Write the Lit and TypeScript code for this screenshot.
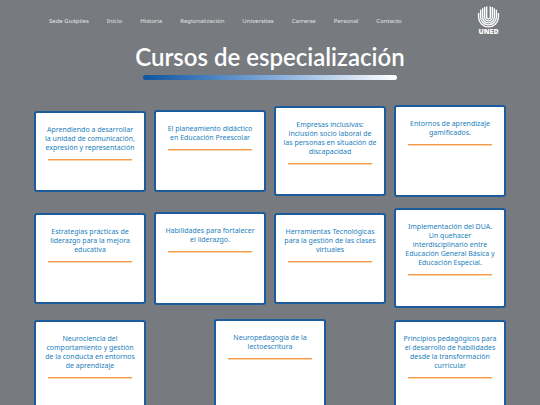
import { LitElement, html, css, svg } from "lit";
import { customElement, property } from "lit/decorators.js";
import { styleMap } from "lit/directives/style-map.js";

interface Course {
  lines: string[];
  height: number;
}

const NAV = ["Sede Guápiles", "Inicio", "Historia", "Regionalización", "Universitas", "Carreras", "Personal", "Contacto"];

const ROWS: Course[][] = [
  [
    { lines: ["Aprendiendo a desarrollar", "la unidad de comunicación,", "expresión y representación"], height: 81 },
    { lines: ["El planeamiento didáctico", "en Educación Preescolar"], height: 82 },
    { lines: ["Empresas inclusivas:", "inclusión socio laboral de", "las personas en situación de", "discapacidad"], height: 90 },
    { lines: ["Entornos de aprendizaje", "gamificados."], height: 92 },
  ],
  [
    { lines: ["Estrategias prácticas de", "liderazgo para la mejora", "educativa"], height: 91 },
    { lines: ["Habilidades para fortalecer", "el liderazgo."], height: 93 },
    { lines: ["Herramientas Tecnológicas", "para la gestión de las clases", "virtuales"], height: 91 },
    { lines: ["Implementación del DUA.", "Un quehacer", "interdisciplinario entre", "Educación General Básica y", "Educación Especial."], height: 100 },
  ],
  [
    { lines: ["Neurociencia del", "comportamiento y gestión", "de la conducta en entornos", "de aprendizaje"], height: 100 },
    { lines: ["Neuropedagogía de la", "lectoescritura"], height: 102 },
    { lines: ["Principios pedagógicos para", "el desarrollo de habilidades", "desde la transformación", "curricular"], height: 100 },
  ],
];

@customElement("course-card")
export class CourseCard extends LitElement {
  @property({ attribute: false }) lines: string[] = [];

  static styles = css`
    :host {
      display: block;
      box-sizing: border-box;
      padding: 12px 4px 0;
      border: 2px solid #1c5b9c;
      border-radius: 3px;
      background: #fff;
      text-align: center;
    }
    .title {
      margin: 0;
      font-size: 7px;
      line-height: 9px;
      font-weight: 400;
      color: #1a80bd;
    }
    .line {
      display: block;
      white-space: nowrap;
    }
    .rule {
      height: 1px;
      margin: 7px 8px 0;
      border: 0;
      border-bottom: 1px solid #fbd3a8;
      background: #f29a4a;
    }
  `;

  render() {
    return html`
      <h2 class="title">${this.lines.map((l) => html`<span class="line">${l} </span>`)}</h2>
      <hr class="rule" />
    `;
  }
}

@customElement("app-root")
export class AppRoot extends LitElement {
  static styles = css`
    :host {
      display: block;
      box-sizing: border-box;
      height: 100vh;
      overflow: hidden;
      background: #777b7f;
      font-family: "Noto Sans", sans-serif;
      color: #fff;
    }
    .top {
      display: flex;
      justify-content: space-between;
      align-items: flex-start;
      padding: 6px 40px 0 49px;
    }
    .nav {
      display: flex;
      gap: 18px;
      padding-top: 11px;
    }
    .nav a {
      font-size: 6px;
      line-height: 9px;
      color: #e3e4e5;
      text-decoration: none;
      white-space: nowrap;
    }
    .brand {
      display: block;
      width: 23px;
    }
    .logo {
      display: block;
      width: 23px;
      height: 22px;
    }
    .name {
      display: block;
      font-size: 7px;
      line-height: 8px;
      font-weight: 900;
      text-align: center;
    }
    .heading {
      margin: 6px 0 0;
      font: 600 24px/30px Lato, sans-serif;
      text-align: center;
    }
    .bar {
      width: 47%;
      height: 5px;
      margin: 3px auto 0;
      border-radius: 3px;
      background: linear-gradient(90deg, #0c54a0, #7fa9d8 50%, #fff);
    }
    .rows {
      display: flex;
      flex-direction: column;
      gap: 11px;
      padding: 25px 34px 0;
    }
    .row {
      display: flex;
      justify-content: space-between;
      align-items: center;
    }
    course-card {
      flex: 0 0 112px;
    }
  `;

  private arcs() {
    return [0, 1, 2, 3, 4].map((i) => {
      const r = 10.8 - i * 2.2;
      const top = 12 - Math.sqrt(Math.max(0, 11.6 * 11.6 - r * r));
      return svg`<path d="M${12 - r} ${top}V12A${r} ${r} 0 0 0 ${12 + r} 12V${top}" />`;
    });
  }

  render() {
    return html`
      <header class="top">
        <nav class="nav">${NAV.map((n) => html`<a href="#">${n}</a>`)}</nav>
        <div class="brand">
          <svg class="logo" viewBox="0 0 24 24" fill="none" stroke="#fff" stroke-width="1.5" aria-hidden="true">
            ${this.arcs()}
          </svg>
          <span class="name">UNED</span>
        </div>
      </header>
      <main>
        <h1 class="heading">Cursos de especialización</h1>
        <div class="bar"></div>
        <div class="rows">
          ${ROWS.map(
            (row) => html`<section class="row">
              ${row.map((c) => html`<course-card .lines=${c.lines} style=${styleMap({ minHeight: `${c.height}px` })}></course-card>`)}
            </section>`,
          )}
        </div>
      </main>
    `;
  }
}
